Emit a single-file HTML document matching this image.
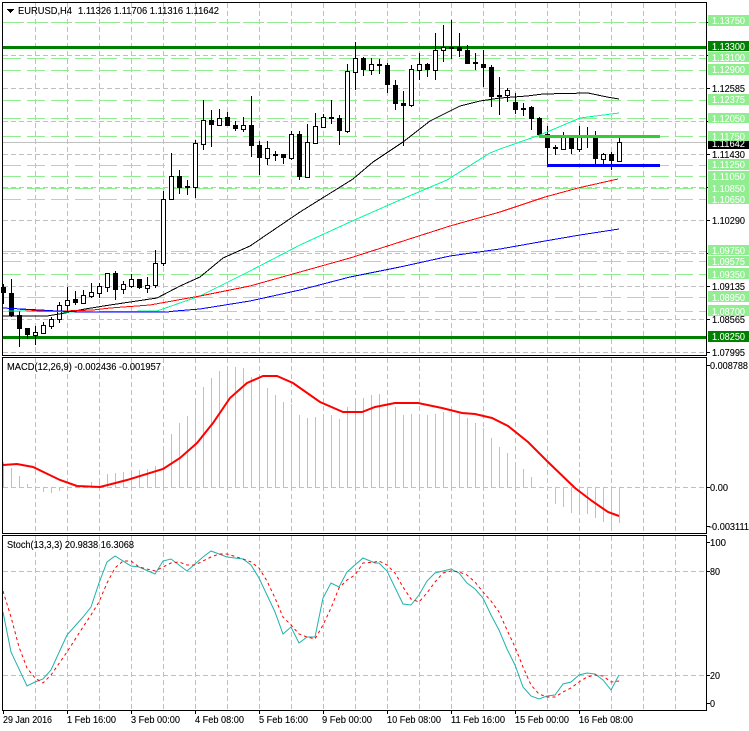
<!DOCTYPE html>
<html><head><meta charset="utf-8"><style>
html,body{margin:0;padding:0;background:#fff;width:749px;height:731px;overflow:hidden}
svg{display:block}
text{font-family:"Liberation Sans",sans-serif;font-size:10.5px;fill:#000;stroke:#000;stroke-width:.12}
text.w{fill:#fff;stroke:#fff;stroke-width:.05}
</style></head><body>
<svg width="749" height="731" viewBox="0 0 749 731" xmlns="http://www.w3.org/2000/svg">
<rect width="749" height="731" fill="#fff"/>
<g shape-rendering="crispEdges">
<!-- vertical grid -->
<path fill="none" stroke="#c0c0c0" stroke-dasharray="5 3" d="M35.5 3V355M67.5 3V355M99.5 3V355M131.5 3V355M163.5 3V355M195.5 3V355M227.5 3V355M259.5 3V355M291.5 3V355M323.5 3V355M355.5 3V355M387.5 3V355M419.5 3V355M451.5 3V355M483.5 3V355M515.5 3V355M547.5 3V355M579.5 3V355M611.5 3V355M643.5 3V355M675.5 3V355"/>
<path fill="none" stroke="#c0c0c0" stroke-dasharray="5 3" d="M35.5 358V533M67.5 358V533M99.5 358V533M131.5 358V533M163.5 358V533M195.5 358V533M227.5 358V533M259.5 358V533M291.5 358V533M323.5 358V533M355.5 358V533M387.5 358V533M419.5 358V533M451.5 358V533M483.5 358V533M515.5 358V533M547.5 358V533M579.5 358V533M611.5 358V533M643.5 358V533M675.5 358V533"/>
<path fill="none" stroke="#c0c0c0" stroke-dasharray="5 3" d="M35.5 536V710M67.5 536V710M99.5 536V710M131.5 536V710M163.5 536V710M195.5 536V710M227.5 536V710M259.5 536V710M291.5 536V710M323.5 536V710M355.5 536V710M387.5 536V710M419.5 536V710M451.5 536V710M483.5 536V710M515.5 536V710M547.5 536V710M579.5 536V710M611.5 536V710M643.5 536V710M675.5 536V710"/>
<!-- horizontal grid -->
<path fill="none" stroke="#c0c0c0" stroke-dasharray="5 3" d="M3 22.5H706M3 55.5H706M3 88.5H706M3 121.5H706M3 154.5H706M3 187.5H706M3 220.5H706M3 253.5H706M3 286.5H706M3 319.5H706M3 352.5H706M3 487.5H706M3 571.5H706M3 675.5H706"/>
<!-- dashed green levels -->
<path fill="none" stroke="#90ee90" stroke-dasharray="18 6" d="M3 22.5H706M3 58.5H706M3 70.5H706M3 100.5H706M3 118.5H706M3 136.5H706M3 165.5H706M3 176.5H706M3 188.5H706M3 199.5H706M3 251.5H706M3 261.5H706M3 274.5H706M3 297.5H706M3 311.5H706"/>
<!-- bid line -->
<path stroke="#c0c0c0" d="M3 142.5H706"/>
<!-- thick levels -->
<rect x="3" y="46" width="703" height="3" fill="#008000"/>
<rect x="3" y="336" width="703" height="3" fill="#008000"/>
<!-- wicks -->
<path fill="none" stroke="#000" d="M3.5 284V304M11.5 279V317M19.5 311V347M27.5 328V339M35.5 326V345M43.5 322V333M51.5 317V329M59.5 302V323M67.5 287V313M75.5 291V305M83.5 290V303M91.5 283V298M99.5 283V298M107.5 273V292M115.5 271V300M123.5 281V294M131.5 274V288M139.5 279V289M147.5 277V293M155.5 250V288M163.5 191V266M171.5 153V199M179.5 170V194M187.5 180V195M195.5 140V198M203.5 100V150M211.5 110V147M219.5 109V125M227.5 112V126M235.5 121V131M243.5 117V132M251.5 96V157M259.5 141V175M267.5 141V165M275.5 151V161M283.5 154V164M291.5 131V160M299.5 131V180M307.5 124V177M315.5 113V144M323.5 114V128M331.5 100V124M339.5 115V145M347.5 64V133M355.5 42V90M363.5 57V76M371.5 58V75M379.5 59V74M387.5 63V93M395.5 80V110M403.5 91V146M411.5 65V107M419.5 53V80M427.5 63V77M435.5 33V80M443.5 25V62M451.5 20V59M459.5 33V57M467.5 45V64M475.5 53V70M483.5 50V87M491.5 65V107M499.5 77V115M507.5 88V102M515.5 93V114M523.5 103V116M531.5 106V130M539.5 117V136M547.5 126V166M555.5 145V155M563.5 132V150M571.5 136V154M579.5 126V152M587.5 127V148M595.5 131V165M603.5 153V167M611.5 152V170M619.5 138V162"/>
<!-- black bodies -->
<path fill="#000" d="M1 287h5v6h-5zM9 293h5v23h-5zM17 315h5v14h-5zM25 328h5v7h-5zM137 279h5v9h-5zM113 273h5v17h-5zM73 299h5v4h-5zM177 176h5v12h-5zM185 186h5v2h-5zM209 120h5v5h-5zM225 117h5v9h-5zM233 125h5v4h-5zM249 125h5v21h-5zM257 145h5v13h-5zM273 154h5v2h-5zM281 154h5v4h-5zM297 134h5v43h-5zM329 117h5v2h-5zM337 118h5v13h-5zM361 58h5v12h-5zM377 64h5v2h-5zM385 65h5v20h-5zM393 85h5v19h-5zM401 103h5v3h-5zM425 64h5v6h-5zM449 47h5v2h-5zM457 47h5v4h-5zM465 50h5v14h-5zM473 62h5v2h-5zM481 64h5v4h-5zM489 67h5v30h-5zM497 95h5v2h-5zM513 102h5v8h-5zM521 108h5v2h-5zM529 107h5v12h-5zM537 118h5v17h-5zM545 134h5v14h-5zM553 147h5v2h-5zM569 136h5v13h-5zM585 136h5v2h-5zM593 137h5v22h-5zM609 154h5v7h-5z"/>
<!-- white bodies -->
<path fill="#fff" stroke="#000" d="M33.5 332.5h4V335.5h-4zM41.5 325.5h4V333.5h-4zM49.5 319.5h4V326.5h-4zM57.5 305.5h4V319.5h-4zM65.5 300.5h4V305.5h-4zM81.5 295.5h4V303.5h-4zM89.5 292.5h4V296.5h-4zM97.5 286.5h4V293.5h-4zM105.5 273.5h4V287.5h-4zM121.5 284.5h4V289.5h-4zM129.5 279.5h4V286.5h-4zM145.5 285.5h4V288.5h-4zM153.5 263.5h4V285.5h-4zM161.5 199.5h4V263.5h-4zM169.5 176.5h4V199.5h-4zM193.5 143.5h4V187.5h-4zM201.5 120.5h4V144.5h-4zM217.5 118.5h4V125.5h-4zM241.5 125.5h4V129.5h-4zM265.5 148.5h4V158.5h-4zM289.5 134.5h4V158.5h-4zM305.5 142.5h4V177.5h-4zM313.5 126.5h4V143.5h-4zM321.5 117.5h4V127.5h-4zM345.5 71.5h4V131.5h-4zM353.5 58.5h4V72.5h-4zM369.5 64.5h4V70.5h-4zM409.5 69.5h4V105.5h-4zM417.5 64.5h4V70.5h-4zM433.5 50.5h4V70.5h-4zM441.5 47.5h4V50.5h-4zM505.5 90.5h4V95.5h-4zM561.5 136.5h4V149.5h-4zM577.5 136.5h4V149.5h-4zM601.5 154.5h4V159.5h-4zM617.5 142.5h4V161.5h-4z"/>
<!-- moving averages -->
<polyline fill="none" stroke="#000" points="3,316 47,316 65,313 85,309 110,305 157,298 180,286 200,277 223,258 250,246 300,212 353,179 373,162 403,142 430,121 460,106 480,101 500,98 527,96 543,94 588,93 607,97 619,99"/>
<polyline fill="none" stroke="#00fa9a" points="8,311 80,312 157,311 200,296 240,276 250,271 300,245 350,222 400,200 447,180 490,153 500,149 540,135 580,118 619,113"/>
<polyline fill="none" stroke="#f00" points="17,309 40,311 63,311 93,310 110,308 150,305 200,296 250,286 300,272 350,258 400,242 450,226 500,212 545,197 578,188 618,179"/>
<polyline fill="none" stroke="#00f" points="3,308 40,310 57,311 80,312 167,312 175,311 200,309 250,301 300,290 350,277 400,267 450,256 500,249 545,241 580,235 619,229"/>
<!-- trend segments -->
<rect x="539" y="135" width="121" height="3" fill="#32cd32"/>
<rect x="547" y="164" width="113" height="3" fill="#00f"/>
<!-- MACD histogram -->
<path fill="none" stroke="#c0c0c0" d="M3.5 487V462M11.5 487V468M19.5 487V476M27.5 487V484M43.5 487V492M51.5 487V493M59.5 487V491M67.5 487V488M75.5 487V486M83.5 487V485M91.5 487V482M99.5 487V478M107.5 487V474M115.5 487V473M123.5 487V472M131.5 487V472M139.5 487V470M147.5 487V469M155.5 487V466M163.5 487V450M171.5 487V434M179.5 487V423M187.5 487V416M195.5 487V403M203.5 487V387M211.5 487V378M219.5 487V371M227.5 487V368M235.5 487V367M243.5 487V368M251.5 487V377M259.5 487V380M267.5 487V388M275.5 487V395M283.5 487V402M291.5 487V404M299.5 487V415M307.5 487V418M315.5 487V417M323.5 487V416M331.5 487V415M339.5 487V419M347.5 487V407M355.5 487V398M363.5 487V398M371.5 487V395M379.5 487V394M387.5 487V398M395.5 487V407M403.5 487V415M411.5 487V414M419.5 487V415M427.5 487V415M435.5 487V414M443.5 487V412M451.5 487V412M459.5 487V414M467.5 487V418M475.5 487V423M483.5 487V428M491.5 487V438M499.5 487V447M507.5 487V453M515.5 487V462M523.5 487V469M531.5 487V477M547.5 487V488M555.5 487V504M563.5 487V507M571.5 487V513M579.5 487V513M587.5 487V514M595.5 487V518M603.5 487V522M611.5 487V527M619.5 487V523"/>
</g>
<!-- MACD signal -->
<polyline fill="none" stroke="#f00" stroke-width="2" points="3,465 17,464 33,467 60,480 77,486 100,487 127,480 163,469 180,458 197,443 213,423 230,398 247,383 263,376 277,376 293,383 320,402 343,412 362,412 375,407 395,403 418,403 442,408 462,413 475,414 492,418 508,426 528,442 548,462 575,488 592,501 608,512 619,516"/>
<!-- Stochastic -->
<polyline fill="none" stroke="#20b2aa" points="3,612 11,652 27,686 35,682 43,679 51,670 67,635 83,617 91,607 99,583 107,562 115,556 131,566 139,567 155,574 163,561 171,559 187,571 203,557 211,551 227,557 243,559 251,565 259,578 275,612 283,634 291,627 299,643 307,637 315,637 323,598 331,583 339,587 347,572 363,558 375,563 379,563 387,571 403,604 411,605 419,595 427,581 435,573 443,571 451,569 459,573 467,583 475,589 483,598 491,615 499,630 507,649 515,665 523,687 531,696 539,699 547,696 555,695 563,684 571,682 579,675 587,673 595,674 603,680 611,690 619,675"/>
<polyline fill="none" stroke="#f00" stroke-dasharray="3 3" points="3,591 11,617 19,647 27,668 35,678 43,683 51,675 67,652 83,627 91,615 99,602 107,583 115,568 123,561 131,561 139,567 155,571 163,567 171,563 179,562 187,565 195,565 211,557 219,554 227,554 243,559 251,562 259,568 267,581 275,598 283,617 291,625 299,634 307,637 315,639 323,625 331,608 339,588 347,580 355,575 363,563 375,562 379,561 387,565 395,573 403,587 411,599 419,602 427,593 435,582 443,573 451,571 459,572 467,575 475,582 483,592 491,601 499,612 507,630 515,647 523,667 531,685 539,694 547,697 555,697 563,692 571,688 579,682 587,677 595,675 603,676 611,682 619,681"/>
<g shape-rendering="crispEdges">
<!-- frames -->
<path fill="none" stroke="#000" d="M2.5 2.5H706.5V355.5H2.5ZM2.5 357.5H706.5V533.5H2.5ZM2.5 535.5H706.5V710.5H2.5Z"/>
<!-- price axis ticks -->
<path fill="none" stroke="#000" d="M707 88.5h3M707 154.5h3M707 220.5h3M707 286.5h3M707 319.5h3M707 352.5h3M707 22.5h3M707 55.5h3M707 121.5h3M707 187.5h3M707 253.5h3M707 487.5h3M707 365.5h3M707 526.5h3M707 542.5h3M707 571.5h3M707 675.5h3M707 703.5h3"/>
<!-- time axis ticks -->
<path fill="none" stroke="#000" d="M3.5 711v3M67.5 711v3M131.5 711v3M195.5 711v3M259.5 711v3M323.5 711v3M387.5 711v3M451.5 711v3M515.5 711v3M579.5 711v3"/>
<!-- label boxes -->
<rect x="708" y="141" width="41" height="8" fill="#000"/>
<path fill="#90ee90" d="M708 15h41v11h-41zM708 52h41v10h-41zM708 64h41v11h-41zM708 94h41v11h-41zM708 113h41v10h-41zM708 131h41v10h-41zM708 159h41v11h-41zM708 171h41v11h-41zM708 182h41v11h-41zM708 193h41v11h-41zM708 245h41v10h-41zM708 256h41v10h-41zM708 268h41v11h-41zM708 291h41v11h-41zM708 305h41v11h-41z"/>
<path fill="#008000" d="M708 41h41v10h-41zM708 331h41v11h-41z"/>
<!-- title triangle -->
<path fill="#000" d="M7 9h7v1h-1v1h-1v1h-1v1h-1v-1h-1v-1h-1v-1h-1z"/>
</g>
<!-- title -->
<text x="18" y="14" textLength="54" lengthAdjust="spacingAndGlyphs">EURUSD,H4</text>
<text x="78" y="14" textLength="141" lengthAdjust="spacingAndGlyphs">1.11326 1.11706 1.11316 1.11642</text>
<text x="7" y="370" textLength="154" lengthAdjust="spacingAndGlyphs">MACD(12,26,9) -0.002436 -0.001957</text>
<text x="7" y="548" textLength="127" lengthAdjust="spacingAndGlyphs">Stoch(13,3,3) 20.9838 16.3068</text>
<!-- price labels -->
<text x="712" y="147" class="w" textLength="33" lengthAdjust="spacingAndGlyphs">1.11642</text>
<rect x="708" y="131" width="41" height="10" fill="#90ee90"/>
<text class="w" x="712" y="24" textLength="33" lengthAdjust="spacingAndGlyphs">1.13750</text>
<text class="w" x="712" y="50" textLength="33" lengthAdjust="spacingAndGlyphs">1.13300</text>
<text class="w" x="712" y="61" textLength="33" lengthAdjust="spacingAndGlyphs">1.13100</text>
<text class="w" x="712" y="73" textLength="33" lengthAdjust="spacingAndGlyphs">1.12900</text>
<text class="w" x="712" y="103" textLength="33" lengthAdjust="spacingAndGlyphs">1.12375</text>
<text class="w" x="712" y="122" textLength="33" lengthAdjust="spacingAndGlyphs">1.12050</text>
<text class="w" x="712" y="140" textLength="33" lengthAdjust="spacingAndGlyphs">1.11750</text>
<text class="w" x="712" y="168" textLength="33" lengthAdjust="spacingAndGlyphs">1.11250</text>
<text class="w" x="712" y="180" textLength="33" lengthAdjust="spacingAndGlyphs">1.11050</text>
<text class="w" x="712" y="192" textLength="33" lengthAdjust="spacingAndGlyphs">1.10850</text>
<text class="w" x="712" y="203" textLength="33" lengthAdjust="spacingAndGlyphs">1.10650</text>
<text class="w" x="712" y="254" textLength="33" lengthAdjust="spacingAndGlyphs">1.09750</text>
<text class="w" x="712" y="265" textLength="33" lengthAdjust="spacingAndGlyphs">1.09575</text>
<text class="w" x="712" y="278" textLength="33" lengthAdjust="spacingAndGlyphs">1.09350</text>
<text class="w" x="712" y="301" textLength="33" lengthAdjust="spacingAndGlyphs">1.08950</text>
<text class="w" x="712" y="315" textLength="33" lengthAdjust="spacingAndGlyphs">1.08700</text>
<text class="w" x="712" y="340" textLength="33" lengthAdjust="spacingAndGlyphs">1.08250</text>
<text x="712" y="92" textLength="33" lengthAdjust="spacingAndGlyphs">1.12585</text>
<text x="712" y="158" textLength="33" lengthAdjust="spacingAndGlyphs">1.11430</text>
<text x="712" y="224" textLength="33" lengthAdjust="spacingAndGlyphs">1.10290</text>
<text x="712" y="290" textLength="33" lengthAdjust="spacingAndGlyphs">1.09135</text>
<text x="712" y="323" textLength="33" lengthAdjust="spacingAndGlyphs">1.08565</text>
<text x="712" y="356" textLength="33" lengthAdjust="spacingAndGlyphs">1.07995</text>
<!-- indicator axis -->
<text x="710" y="369" textLength="38" lengthAdjust="spacingAndGlyphs">0.008788</text>
<text x="710" y="491" textLength="18" lengthAdjust="spacingAndGlyphs">0.00</text>
<text x="709" y="530" textLength="40" lengthAdjust="spacingAndGlyphs">-0.003111</text>
<text x="710" y="546" textLength="16" lengthAdjust="spacingAndGlyphs">100</text>
<text x="710" y="575" textLength="10" lengthAdjust="spacingAndGlyphs">80</text>
<text x="710" y="679" textLength="10" lengthAdjust="spacingAndGlyphs">20</text>
<text x="710" y="707" textLength="5" lengthAdjust="spacingAndGlyphs">0</text>
<!-- time axis -->
<text x="3" y="723" textLength="49" lengthAdjust="spacingAndGlyphs">29 Jan 2016</text>
<text x="67" y="723" textLength="49" lengthAdjust="spacingAndGlyphs">1 Feb 16:00</text>
<text x="131" y="723" textLength="49" lengthAdjust="spacingAndGlyphs">3 Feb 00:00</text>
<text x="195" y="723" textLength="49" lengthAdjust="spacingAndGlyphs">4 Feb 08:00</text>
<text x="259" y="723" textLength="49" lengthAdjust="spacingAndGlyphs">5 Feb 16:00</text>
<text x="322" y="723" textLength="50" lengthAdjust="spacingAndGlyphs">9 Feb 00:00</text>
<text x="387" y="723" textLength="54" lengthAdjust="spacingAndGlyphs">10 Feb 08:00</text>
<text x="451" y="723" textLength="54" lengthAdjust="spacingAndGlyphs">11 Feb 16:00</text>
<text x="515" y="723" textLength="54" lengthAdjust="spacingAndGlyphs">15 Feb 00:00</text>
<text x="579" y="723" textLength="54" lengthAdjust="spacingAndGlyphs">16 Feb 08:00</text>
</svg>
</body></html>
